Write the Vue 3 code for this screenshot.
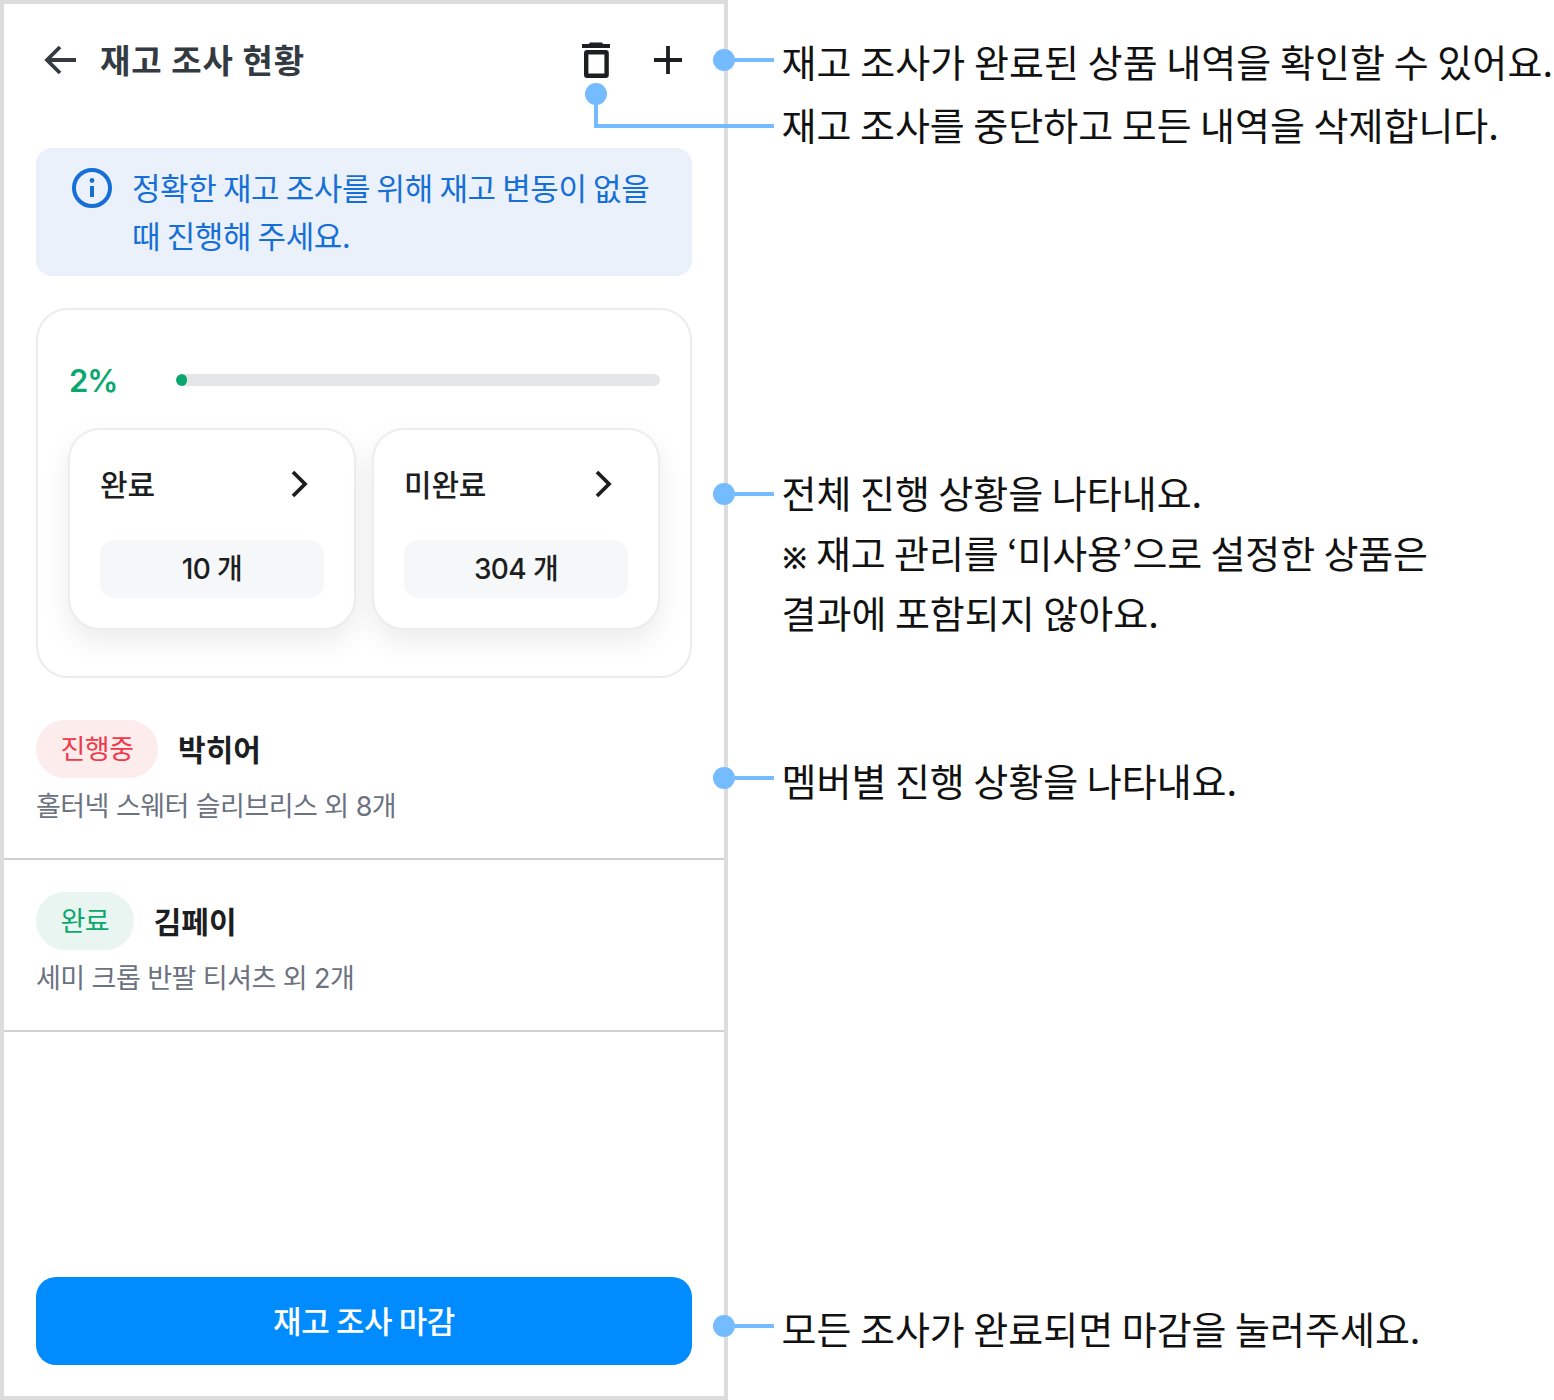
<script setup>
const members = [
  { status: '진행중', tone: 'red', name: '박히어', items: '홀터넥 스웨터 슬리브리스 외 8개' },
  { status: '완료', tone: 'green', name: '김페이', items: '세미 크롭 반팔 티셔츠 외 2개' }
]
const tallies = [
  { label: '완료', count: '10 개' },
  { label: '미완료', count: '304 개' }
]
</script>

<template>
  <div class="page">
    <main class="frame">
      <header class="head">
        <div class="head-left">
          <svg class="back" width="34" height="32" viewBox="0 0 34 32" fill="none" stroke="#333a42" stroke-width="3.800">
            <path d="M32 16H3M16 3 3 16l13 13" />
          </svg>
          <h1 class="title">재고 조사 현황</h1>
        </div>
        <div class="head-right">
          <svg width="32" height="40" viewBox="0 0 32 40" fill="none">
            <path d="M10 2.500h12l2 2.500H8z" fill="#1c1e22" />
            <rect x="2" y="4" width="28" height="4" fill="#1c1e22" />
            <rect x="6.200" y="12.200" width="20.400" height="23.600" rx="1" stroke="#1c1e22" stroke-width="4.400" />
          </svg>
          <svg width="28" height="28" viewBox="0 0 28 28" fill="none" stroke="#1c1e22" stroke-width="3.800">
            <path d="M14 0v28M0 14h28" />
          </svg>
        </div>
      </header>

      <section class="info">
        <svg class="info-icon" width="40" height="40" viewBox="0 0 40 40" fill="none">
          <circle cx="20" cy="20" r="18" stroke="#166fd6" stroke-width="4" />
          <circle cx="20" cy="12.500" r="2.400" fill="#166fd6" />
          <path d="M20 18v11" stroke="#166fd6" stroke-width="4" />
        </svg>
        <p class="info-text">정확한 재고 조사를 위해 재고 변동이 없을 때 진행해 주세요.</p>
      </section>

      <section class="summary">
        <div class="progress">
          <span class="percent">2%</span>
          <div class="track"><div class="fill" :style="{ width: '2.2%' }"></div></div>
        </div>
        <div class="tallies">
          <article v-for="t in tallies" :key="t.label" class="tally">
            <div class="tally-head">
              <span class="tally-label">{{ t.label }}</span>
              <svg width="18" height="28" viewBox="0 0 18 28" fill="none" stroke="#1c1e22" stroke-width="3.800">
                <path d="M3 2l12 12L3 26" />
              </svg>
            </div>
            <div class="chip">{{ t.count }}</div>
          </article>
        </div>
      </section>

      <ul class="members">
        <li v-for="m in members" :key="m.name" class="member">
          <div class="member-top">
            <span class="badge" :class="m.tone">{{ m.status }}</span>
            <span class="name">{{ m.name }}</span>
          </div>
          <p class="items">{{ m.items }}</p>
        </li>
      </ul>

      <button class="finish">재고 조사 마감</button>
    </main>

    <div class="link link-a"><i class="dot"></i><i class="line"></i></div>
    <div class="elbow"><i class="dot elbow-dot"></i></div>
    <div class="link link-b"><i class="dot"></i><i class="line"></i></div>
    <div class="link link-c"><i class="dot"></i><i class="line"></i></div>
    <div class="link link-d"><i class="dot"></i><i class="line"></i></div>

    <p class="note note-a">재고 조사가 완료된 상품 내역을 확인할 수 있어요.</p>
    <p class="note note-b">재고 조사를 중단하고 모든 내역을 삭제합니다.</p>
    <p class="note note-c">전체 진행 상황을 나타내요.<br /><span class="mark">※</span> <span class="tight">재고 관리를 ‘미사용’으로 설정한 상품은</span><br />결과에 포함되지 않아요.</p>
    <p class="note note-d">멤버별 진행 상황을 나타내요.</p>
    <p class="note note-e">모든 조사가 완료되면 마감을 눌러주세요.</p>
  </div>
</template>

<style>
html, body { margin: 0; background: #fff; }
</style>

<style scoped>
.page {
  position: relative;
  width: 1554px;
  height: 1400px;
  background: #fff;
  font-family: "Noto Sans CJK KR", "Inter", sans-serif;
  overflow: hidden;
}
.frame {
  box-sizing: border-box;
  width: 728px;
  height: 1400px;
  border: 4px solid #dcdcdc;
  display: flex;
  flex-direction: column;
}
.head {
  height: 112px;
  box-sizing: border-box;
  padding: 0 42px 0 40px;
  display: flex;
  align-items: center;
  justify-content: space-between;
}
.head-left { display: flex; align-items: center; gap: 22px; }
.head-right { display: flex; align-items: center; gap: 42px; }
.title { margin: 0 0 3px; font-size: 33px; font-weight: 700; color: #333a42; letter-spacing: 1px; line-height: 40px; }
.back { display: block; }

.info {
  margin: 32px 32px 0;
  height: 128px;
  box-sizing: border-box;
  background: #eaf1fb;
  border-radius: 16px;
  padding: 15px 32px 0 36px;
  display: flex;
  gap: 20px;
}
.info-icon { flex: none; margin-top: 5px; }
.info-text { margin: 0; font-size: 31px; line-height: 48px; color: #166fd6; letter-spacing: -0.4px; }

.summary {
  margin: 32px 32px 0;
  height: 370px;
  box-sizing: border-box;
  border: 2px solid #ececec;
  border-radius: 32px;
  padding: 64px 30px 0;
}
.progress { display: flex; align-items: center; height: 12px; }
.percent { width: 107px; margin: 0 0 0 1px; flex: none; font-size: 31px; font-weight: 600; color: #0aa76f; font-family: "Inter", sans-serif; letter-spacing: -1px; }
.track { flex: 1; height: 12px; border-radius: 6px; background: #e5e6e8; overflow: hidden; }
.fill { height: 100%; border-radius: 6px; background: #0aa76f; }
.tallies { display: flex; gap: 16px; margin-top: 42px; }
.tally {
  flex: 1;
  height: 202px;
  box-sizing: border-box;
  border: 2px solid #ededed;
  border-radius: 32px;
  background: #fff;
  box-shadow: 0 12px 28px rgba(0, 0, 0, 0.08);
  padding: 30px 30px 0;
}
.tally-head { display: flex; align-items: center; justify-content: space-between; height: 48px; padding-right: 16px; }
.tally-label { margin-bottom: 3px; font-size: 30px; font-weight: 500; color: #1c1e22; letter-spacing: -0.2px; }
.chip {
  margin-top: 32px;
  height: 58px;
  padding-bottom: 4px;
  box-sizing: border-box;
  border-radius: 14px;
  background: #f6f7f9;
  display: flex;
  align-items: center;
  justify-content: center;
  font-family: "Inter", "Noto Sans CJK KR", sans-serif;
  font-size: 28px;
  font-weight: 500;
  color: #1c1e22;
  letter-spacing: -0.6px;
}

.members { list-style: none; margin: 10px 0 0; padding: 0; }
.member {
  height: 172px;
  box-sizing: border-box;
  border-bottom: 2px solid #d0d0d0;
  padding: 32px 32px 0;
}
.member-top { display: flex; align-items: center; gap: 20px; }
.badge {
  height: 58px;
  box-sizing: border-box;
  padding: 0 24.5px 4px;
  border-radius: 29px;
  display: flex;
  align-items: center;
  font-size: 27px;
  letter-spacing: -0.5px;
}
.red { background: #fdecec; color: #f0394a; }
.green { background: #e9f5f0; color: #0aa76f; }
.name { margin-bottom: 3px; font-size: 30px; font-weight: 700; color: #1c1e22; letter-spacing: 0; }
.items { margin: 9px 0 0; font-family: "Inter", "Noto Sans CJK KR", sans-serif; font-size: 27px; line-height: 40px; color: #6b7280; letter-spacing: -0.55px; }

.finish {
  margin: auto 32px 31px;
  height: 88px;
  padding: 0 0 3px;
  border: 0;
  border-radius: 20px;
  background: #008cff;
  color: #fff;
  font-family: inherit;
  font-size: 31px;
  font-weight: 500;
  letter-spacing: -0.4px;
}

.link { position: absolute; left: 713px; display: flex; align-items: center; }
.link-a { top: 49px; }
.link-b { top: 483px; }
.link-c { top: 767px; }
.link-d { top: 1315px; }
.dot { display: block; width: 22px; height: 22px; border-radius: 50%; background: #74bbff; flex: none; }
.line { display: block; width: 39px; height: 4px; background: #74bbff; }
.elbow {
  position: absolute;
  left: 594px;
  top: 94px;
  width: 180px;
  height: 34px;
  box-sizing: border-box;
  border-left: 4px solid #74bbff;
  border-bottom: 4px solid #74bbff;
}
.elbow-dot { position: absolute; left: -13px; top: -11px; }

.note {
  position: absolute;
  left: 781.5px;
  margin: 0;
  font-size: 38px;
  line-height: 60px;
  color: #111;
  white-space: nowrap;
}
.mark { font-family: "Liberation Sans", sans-serif; font-size: 28px; font-weight: 700; line-height: 0; margin: 0 2px 0 1px; }
.tight { letter-spacing: -0.12px; }
.note-a { top: 31px; letter-spacing: 0.08px; }
.note-b { top: 94px; }
.note-c { top: 462px; }
.note-d { top: 750px; }
.note-e { top: 1298px; }
</style>
